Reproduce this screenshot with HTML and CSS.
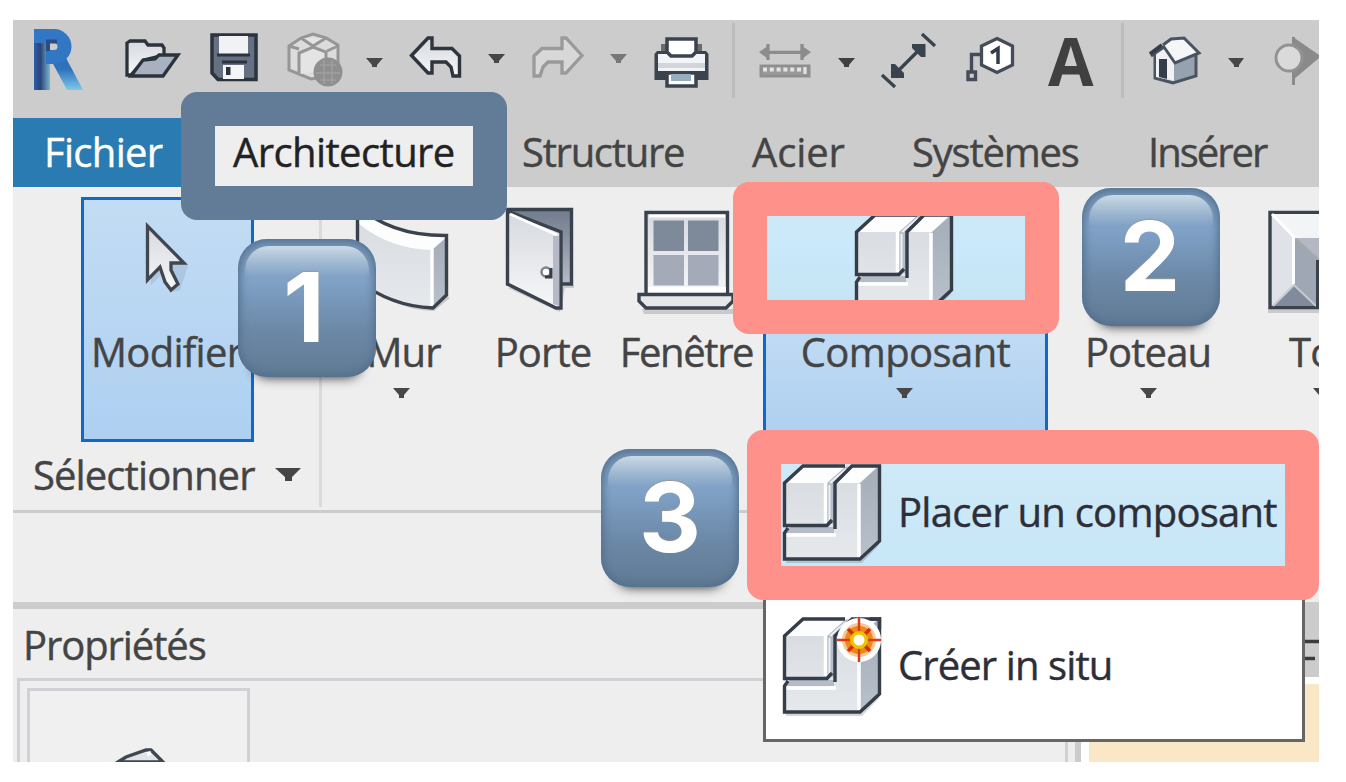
FILE: index.html
```html
<!DOCTYPE html>
<html lang="fr">
<head>
<meta charset="utf-8">
<title>Revit – Placer un composant</title>
<link rel="stylesheet" href="styles.css">
</head>
<body>
<svg class="defs" width="0" height="0">
  <defs>
    <linearGradient id="metal" x1="0" y1="0" x2="0" y2="1"><stop offset="0" stop-color="#d6d9df"/><stop offset="1" stop-color="#f6f7f8"/></linearGradient>
    <linearGradient id="face" x1="0" y1="0" x2="0" y2="1"><stop offset="0" stop-color="#d6d9df"/><stop offset="1" stop-color="#e6e9ec"/></linearGradient>
    <linearGradient id="side" x1="0" y1="0" x2="0" y2="1"><stop offset="0" stop-color="#a5adb9"/><stop offset="1" stop-color="#b8c0cb"/></linearGradient>
    <linearGradient id="dark" x1="0" y1="0" x2="0" y2="1"><stop offset="0" stop-color="#6f7b8c"/><stop offset="1" stop-color="#b5b9c5"/></linearGradient>
    <linearGradient id="logo" x1="0" y1="0" x2="0" y2="1"><stop offset="0" stop-color="#2f6fb5"/><stop offset=".4" stop-color="#2f74bd"/><stop offset="1" stop-color="#7cc8ea"/></linearGradient>
    <linearGradient id="stem" x1="0" y1="0" x2="1" y2="0"><stop offset="0" stop-color="#2c5ea8"/><stop offset=".4" stop-color="#2a4478"/><stop offset="1" stop-color="#7db5cf"/></linearGradient>
    <symbol id="component" viewBox="0 0 104 104">
      <path d="M6 97H80L99 79V83L82 101H6Z" fill="#777" opacity=".3"/>
      <path d="M4 21 22 4H99V79L80 97H4V70L8 66H4Z" fill="url(#face)"/>
      <path d="M5 21 23 4H66L48 21ZM55 21 73 4H98L80 21Z" fill="#fdfdfd"/>
      <path d="M80 21 98 5V79L80 97Z" fill="url(#side)"/>
      <path d="M47 21 65 5 71 5 54 21V62L47 62ZM10 65H54V71H7Z" fill="#b4bcc7"/>
      <path d="M45.500 21V61M5 73H56M79 22V96" fill="none" stroke="#fff" stroke-width="3.500"/>
      <path d="M49.500 23V61M50 21 66 7" fill="none" stroke="#eef0f3" stroke-width="2"/>
      <path d="M65 4H23L4.500 21V63.500H47L52 58M55 67V21L72 4H99.500V79L80 97H4.500V71L8 66" fill="none" stroke="#343d48" stroke-width="3.400"/>
    </symbol>
  </defs>
</svg>

<main class="app">
  <header class="quickbar">
    <svg width="100" height="98" viewBox="13 20 100 98">
      <path d="M34 29H50V90H34Z" fill="url(#stem)"/>
      <path d="M51 60 65 56 83 90H67Z" fill="url(#logo)"/>
      <path d="M34 36H54A10.500 10.500 0 0 1 54 57H46" fill="none" stroke="#3277c4" stroke-width="14"/>
      <path d="M48 51V41.500H57" fill="none" stroke="#2b4c84" stroke-width="4"/>
    </svg>
    <svg width="87" height="98" viewBox="113 20 87 98">
      <path d="M127 43 130 41H145L148 45H162L164 48V55L144 60 131 75H127Z" fill="url(#metal)" stroke="#2b333c" stroke-width="3.300"/>
      <path d="M131 76 143 60 155 59 159 55H178L163 76Z" fill="#a9b0bf" stroke="#2b333c" stroke-width="3.300"/>
    </svg>
    <svg width="75" height="98" viewBox="200 20 75 98">
      <path d="M212 35H256V79.500H218L212 73Z" fill="#657082" stroke="#2b333c" stroke-width="3.500"/>
      <path d="M219 36H248V54H219Z" fill="#f1f2f4"/><path d="M217 55H250M222 62H247" stroke="#2b333c" stroke-width="3"/>
      <path d="M223 65H244V79H223Z" fill="#f4f5f6"/><path d="M226 67H230.500V75H226Z" fill="#2b333c"/>
    </svg>
    <svg width="83" height="98" viewBox="275 20 83 98">
      <g stroke="#969696" stroke-width="3"><path d="M289 46 301 38 313 34 326 38 338 45V68L322 77 311 79 289 70Z" fill="#dcdcdc"/>
      <path d="M289 46 299 49M299 74V53L313 47 326 52V70M338 46 327 51M301 38 313 46 326 38" fill="#e4e4e4"/></g>
      <circle cx="328" cy="72" r="14.500" fill="#8f8f8f"/><path d="M320 65H336M316 73H340M320 80H336M324 60V84M332 60V84" stroke="#a0a0a0" stroke-width="1.500"/>
    </svg>
    <svg width="42" height="98" viewBox="358 20 42 98"><path d="M366 58H383L377 65V67H372V65Z" fill="#474747"/></svg>
    <svg width="78" height="98" viewBox="400 20 78 98">
      <path d="M411.500 55.500 428 38H432V48.500H452L459.500 56V76H453L451 67 446 62H432V73H428Z" fill="url(#metal)" stroke="#2e353d" stroke-width="3.400"/>
    </svg>
    <svg width="42" height="98" viewBox="478 20 42 98"><path d="M488 54H505L499 61V63H494V61Z" fill="#474747"/></svg>
    <svg width="78" height="98" viewBox="520 20 78 98">
      <path d="M582 55.500 566 38H562V48.500H542L534 56V76H540L543 67 548 62H562V73H566Z" fill="#d8d8d8" stroke="#9a9a9a" stroke-width="3.300"/>
    </svg>
    <svg width="42" height="98" viewBox="598 20 42 98"><path d="M610 54H627L621 61V63H616V61Z" fill="#777"/></svg>
    <svg width="92" height="98" viewBox="640 20 92 98">
      <path d="M661 44H702V55H661Z" fill="#6c6c6c"/><path d="M657 51H706L708.500 54V80H654.500V54Z" fill="#3b434e"/>
      <path d="M658 54H705V71H658Z" fill="#f3f4f7"/><path d="M658 63H705V68H658Z" fill="#d3d5dc"/>
      <path d="M667 39H696V52L692 56H671L667 52Z" fill="#fff" stroke="#3b434e" stroke-width="3.500"/>
      <path d="M667 73H696V86H667Z" fill="#fff" stroke="#3b434e" stroke-width="3.500"/><path d="M671 74H691V81H671Z" fill="#96acbf"/>
    </svg>
    <i class="bar-split"></i>
    <svg width="90" height="98" viewBox="735 20 90 98">
      <path d="M762 52.300H808M768 44V60M802 44V60" stroke="#8c8c8c" stroke-width="3.300"/><path d="M759 52 768 46V59ZM811 52 802 46V59Z" fill="#8c8c8c"/>
      <path d="M761 66H809V76H761Z" fill="#9a9a9a" stroke="#8f8f8f" stroke-width="3"/><path d="M763 69.500H805" stroke="#e4e4e4" stroke-width="4" stroke-dasharray="4 2.800"/><path d="M805 67V74" stroke="#e4e4e4" stroke-width="3"/>
    </svg>
    <svg width="42" height="98" viewBox="825 20 42 98"><path d="M838 58H855L849 65V67H844V65Z" fill="#40403e"/></svg>
    <svg width="85" height="98" viewBox="867 20 85 98">
      <path d="M882 75 895 87M922 34 935 46M897 72 922 47" stroke="#3a434d" stroke-width="3.300"/>
      <path d="M891 64H895L904 73V78H891ZM912 44H925.500V57H921L912 48Z" fill="#3a434d"/>
    </svg>
    <svg width="84" height="98" viewBox="952 20 84 98">
      <path d="M997 38.500 1012.500 46V65L997 72.500 981.500 65V46Z" fill="#fff" stroke="#434c58" stroke-width="3.300"/>
      <path d="M991 53 998 48.500V64" fill="none" stroke="#333c46" stroke-width="3.500"/>
      <path d="M981 54.500H971.500V72M968 72H975.500V79.500H968Z" fill="none" stroke="#434c58" stroke-width="3.400"/>
    </svg>
    <span class="text-tool">A</span>
    <i class="bar-split"></i>
    <svg width="92" height="98" viewBox="1124 20 92 98">
      <path d="M1155 54V78L1173 83 1196 76V52L1175 62Z" fill="#97a2b0" stroke="#4a5461" stroke-width="3"/>
      <path d="M1156 54 1163 47 1174 63V81L1156 77Z" fill="#eff1f5"/><path d="M1159 59H1167V79L1159 77Z" fill="#343d49"/>
      <path d="M1163 45 1171 39 1184 38 1199 53 1175 63 1164 47 1151 56" fill="#f5f6f8" stroke="#4a5461" stroke-width="3"/>
      <path d="M1150 54 1162 45" stroke="#343d49" stroke-width="4"/>
    </svg>
    <svg width="44" height="98" viewBox="1216 20 44 98"><path d="M1228 58H1244L1239 65V67H1234V65Z" fill="#474747"/></svg>
    <svg width="59" height="98" viewBox="1260 20 59 98">
      <path d="M1293 37 1319 55V58L1293 80Z" fill="#8a8a8a"/><path d="M1293.500 37V85" stroke="#8a8a8a" stroke-width="3"/>
      <circle cx="1289" cy="58" r="13" fill="#dadada" stroke="#929292" stroke-width="3"/>
    </svg>
  </header>

  <nav class="tabs">
    <a class="tab file">Fichier</a>
    <a class="tab active">Architecture</a>
    <a class="tab structure">Structure</a>
    <a class="tab steel">Acier</a>
    <a class="tab systems">Systèmes</a>
    <a class="tab insert">Insérer</a>
  </nav>

  <section class="ribbon">
    <div class="select-panel">
      <div class="modify">
        <svg width="167" height="124" viewBox="84 200 167 124">
          <path d="M151 229 188 266 180 290 174 292 164 272 151 285Z" fill="#5c7896" opacity=".18"/>
          <path d="M147.500 226V280L160 267 165 282 171 290 178 284 171 270V263H184Z" fill="url(#metal)" stroke="#40474f" stroke-width="3.300"/>
        </svg>
        <span>Modifier</span>
      </div>
      <div class="panel-title"><span>Sélectionner</span>
        <svg width="26" height="14" viewBox="0 0 26 14"><path d="M0 0H26L17 9V13H10V9Z" fill="#454545"/></svg>
      </div>
    </div>
    <div class="tools">
      <div class="tool wall">
        <svg width="154" height="137" viewBox="322 187 154 137">
          <path d="M360 283Q400 311 434 311L450 298 447 296 433 308Z" fill="#888" opacity=".35"/>
          <path d="M357.500 205Q390 238 447 236V296L433 308Q390 306 357.500 280Z" fill="url(#face)"/>
          <path d="M359 205Q390 236 446 237L432 250Q390 249 359 224Z" fill="#fdfdfd"/><path d="M432 250 446 238V295L432 307Z" fill="url(#side)"/>
          <path d="M432 249V306" stroke="#fff" stroke-width="3.500"/>
          <path d="M357.500 205Q390 236 446.500 235.500V295L433 308Q390 306 357.500 280Z" fill="none" stroke="#3a434d" stroke-width="3.400"/>
        </svg>
        <span>Mur</span>
        <svg width="17" height="10" viewBox="0 0 17 10"><path d="M0 0H17L11 7V10H6V7Z" fill="#474747"/></svg>
      </div>
      <div class="tool door">
        <svg width="134" height="137" viewBox="476 187 134 137">
          <path d="M508 288 560 312 565 288H574V285Z" fill="#888" opacity=".35"/>
          <path d="M508 209.500H571.500V284H508Z" fill="url(#dark)" stroke="#3a434d" stroke-width="3.400"/>
          <path d="M507.500 211 561 232V308H556L507.500 284Z" fill="url(#metal)" stroke="#3a434d" stroke-width="3.400"/>
          <path d="M510 214 557 235" stroke="#fff" stroke-width="3"/><path d="M553 236 559 236V306L553 304Z" fill="#b5bac6"/>
          <circle cx="546" cy="272" r="4.500" fill="#fff" stroke="#7a8490" stroke-width="2.500"/><path d="M545 277H551V268" fill="none" stroke="#343d48" stroke-width="3"/>
        </svg>
        <span>Porte</span>
      </div>
      <div class="tool window">
        <svg width="153" height="137" viewBox="610 187 153 137">
          <path d="M642 309H733V314H644Z" fill="#888" opacity=".35"/>
          <path d="M646 212.500H727.500V296H646Z" fill="url(#metal)" stroke="#3a434d" stroke-width="3.400"/>
          <path d="M649 216H725" stroke="#fff" stroke-width="3"/>
          <path d="M653.500 220.500H684V251H653.500ZM688 220.500H718.500V251H688Z" fill="#7e8999"/><path d="M653.500 255H684V285.500H653.500ZM688 255H718.500V285.500H688Z" fill="#a4aab8"/>
          <path d="M648 287H726V292H648Z" fill="#fff"/>
          <path d="M639 294.500H733V301L726 308H646L639 301Z" fill="#e5e7eb" stroke="#3a434d" stroke-width="3.400"/>
        </svg>
        <span>Fenêtre</span>
      </div>
      <div class="tool component">
        <div class="component-icon"><svg width="104" height="104"><use href="#component"/></svg></div>
        <span>Composant</span>
        <svg width="17" height="10" viewBox="0 0 17 10"><path d="M0 0H17L11 7V10H6V7Z" fill="#474747"/></svg>
      </div>
      <div class="tool column">
        <div class="icon-slot"></div>
        <span>Poteau</span>
        <svg width="17" height="10" viewBox="0 0 17 10"><path d="M0 0H17L11 7V10H6V7Z" fill="#474747"/></svg>
      </div>
      <div class="tool roof">
        <svg width="71" height="137" viewBox="1248 187 71 137">
          <path d="M1268 308H1319V313H1268Z" fill="#888" opacity=".35"/>
          <path d="M1270 212.500H1340V307.500H1270Z" fill="#dfe2e7" stroke="#3a434d" stroke-width="3.400"/>
          <path d="M1272 214H1319V238H1295Z" fill="#f3f4f6"/><path d="M1273 306 1294 285 1316 306Z" fill="#818b9c"/>
          <path d="M1295 238H1319V306H1316L1295 286Z" fill="#a0a7b4"/><path d="M1295 238 1319 260V238Z" fill="#b3b8c4"/>
          <path d="M1272 214 1295 238" fill="none" stroke="#fff" stroke-width="3"/><path d="M1296 239 1319 260" stroke="#a8a8a8" stroke-width="2"/>
          <path d="M1293.500 237V285" stroke="#fff" stroke-width="3"/><path d="M1273 306 1294 285 1316 306" fill="none" stroke="#c6cad2" stroke-width="2"/><path d="M1318 260V307" stroke="#3a434d" stroke-width="4"/>
        </svg>
        <span>Toit</span>
        <svg width="17" height="10" viewBox="0 0 17 10"><path d="M0 0H17L11 7V10H6V7Z" fill="#474747"/></svg>
      </div>
    </div>
  </section>
  <div class="options-bar"></div>

  <section class="workspace">
    <aside class="properties">
      <h2>Propriétés</h2>
      <div class="property-list"><div class="preview">
        <svg width="217" height="71" viewBox="30 691 217 71"><path d="M118 762 126 757 146 750H151L163 762Z" fill="#dfe3ea" stroke="#3f4750" stroke-width="3.400"/><path d="M147 754 151 753" stroke="#fff" stroke-width="4"/></svg>
      </div></div>
    </aside>
    <div class="drawing">
      <div class="view-tab"><svg width="14" height="24" viewBox="0 0 14 24"><path d="M0 3.500H14M0 20.500H10" stroke="#3c3c3c" stroke-width="3.400"/></svg></div>
      <div class="sheet"></div>
    </div>
  </section>

  <div class="menu">
    <div class="menu-item hovered"><svg width="104" height="104"><use href="#component"/></svg><span class="place">Placer un composant</span></div>
    <div class="menu-item"><svg width="104" height="104">
      <use href="#component"/>
      <path d="M79 3A22 22 0 1 0 79.100 3Z" fill="#fff"/><path d="M90 4H99.500V14" fill="none" stroke="#343d48" stroke-width="3.400"/>
      <circle cx="79" cy="25" r="17" fill="#f6c898"/><circle cx="79" cy="25" r="14" fill="#eb8a18"/>
      <path d="M79 3V47M57 25H101" stroke="#e0391a" stroke-width="2.500"/><path d="M68 14 90 36M90 14 68 36" stroke="#d92c10" stroke-width="3.500"/>
      <circle cx="79" cy="25" r="9" fill="#ecc400"/><circle cx="79" cy="25" r="5.500" fill="#fffdf0"/>
    </svg><span class="create">Créer in situ</span></div>
  </div>

  <div class="frame blue"></div>
  <div class="frame pink tool-frame"></div>
  <div class="frame pink menu-frame"></div>
  <div class="key one">1</div>
  <div class="key two">2</div>
  <div class="key three">3</div>
</main>
</body>
</html>
```
FILE: styles.css
```css
* { box-sizing: border-box; }
body { margin: 0; background: #fff; }
svg { display: block; flex: none; }
.defs { position: absolute; }

.app {
  position: relative;
  display: flex;
  flex-direction: column;
  width: 1306px;
  height: 742px;
  margin: 20px 13px;
  overflow: hidden;
  background: #eee;
  color: #444;
  font: 40px/54px "Open Sans", "Noto Sans", sans-serif;
  letter-spacing: -.9px;
  white-space: nowrap;
  -webkit-text-stroke: .4px;
}

.quickbar { display: flex; flex: none; height: 98px; background: #ccc; }
.bar-split { flex: none; width: 3px; height: 75px; margin-top: 3px; background: #bdbdbd; }
.text-tool {
  width: 86px;
  padding-left: 12px;
  font-size: 66px;
  font-weight: 700;
  line-height: 80px;
  color: #404040;
  -webkit-text-stroke: 0;
}

.tabs {
  display: grid;
  grid-template-columns: 168px 325px 230px 160px 236px 187px;
  flex: none;
  height: 69px;
  background: #ccc;
}
.tab { padding: 7px 0 0 16px; letter-spacing: -1px; }
.tab.file { padding-left: 31px; background: #2b7bb3; color: #fff; letter-spacing: -.7px; }
.tab.active { padding-left: 52px; background: #eee; color: #222; letter-spacing: -.6px; }
.tab.structure { letter-spacing: -1.3px; }
.tab.steel { letter-spacing: -.1px; }
.tab.systems { letter-spacing: -1.2px; }
.tab.insert { letter-spacing: -2px; }

.ribbon {
  display: flex;
  flex: none;
  height: 326px;
  border-bottom: 3px solid #ccc;
}
.select-panel {
  flex: none;
  width: 309px;
  height: 320px;
  padding: 10px 0 0 68px;
  border-right: 3px solid #dadada;
}
.modify {
  width: 173px;
  height: 245px;
  border: 3px solid #1168c7;
  background: linear-gradient(#c3dcf4, #aed0f1);
}
.modify span { display: block; padding: 1px 0 0 7px; letter-spacing: -.7px; }
.panel-title { display: flex; align-items: center; gap: 20px; margin: 6px 0 0 -48px; }

.tools { display: grid; grid-template-columns: 154px 134px 153px 285px 200px 71px; width: 997px; }
.tool { display: flex; flex-direction: column; align-items: center; height: 323px; overflow: hidden; }
.tool > span { margin-top: 1px; }
.tool > svg:last-child { margin-top: 9px; }
.wall span { margin-left: 9px; }
.wall > svg:last-child { margin-left: 4px; }
.window span { letter-spacing: -1.4px; }
.component span { letter-spacing: -.6px; }
.component {
  border: solid #1168c7;
  border-width: 0 3px;
  background: linear-gradient(#d0eaf6, #cae9fa 55px, #c5e5f5 113px, #c1dbf4 140px, #aed0f0 250px);
}
.component > svg:last-child { margin-left: -3px; }
.component-icon { height: 137px; padding: 24px 4px 0 0; }
.icon-slot { height: 137px; }
.roof { align-items: flex-start; }
.roof span { padding-left: 41px; }
.roof > svg:last-child { margin-left: 65px; }

.options-bar { flex: none; height: 96px; border-bottom: 7px solid #ccc; }

.workspace { display: flex; flex: 1; }
.properties { width: 1062px; padding-left: 4px; }
.properties h2 { margin: 9px 0 6px; padding-left: 6px; font: inherit; letter-spacing: -1.1px; }
.property-list {
  width: 1051px;
  height: 90px;
  padding: 7px;
  border: 3px solid #cfd1d4;
}
.preview { width: 223px; height: 90px; border: 3px solid #cfd1d4; background: #f0f0f0; }
.drawing { flex: 1; border-left: 6px solid #ccc; background: #fff; }
.view-tab { display: flex; justify-content: flex-end; height: 68px; padding-top: 29px; background: #ccc; }
.sheet { height: 78px; margin: 7px 0 0 8px; background: #f9e7c5; }

.menu {
  position: absolute;
  left: 750px;
  top: 420px;
  width: 542px;
  height: 302px;
  border: 3px solid #666;
  background: #fff;
}
.menu-item { display: flex; height: 153px; padding: 19px 0 0 14px; color: #2e2e38; }
.menu-item.hovered { background: linear-gradient(#d0eaf7, #c5e6f7); }
.menu-item span { margin: 23px 0 0 14px; }
.menu-item .place { letter-spacing: -.75px; }

.frame { position: absolute; border: 34px solid; border-radius: 16px; }
.blue { left: 168px; top: 72px; width: 326px; height: 128px; border-color: #627b96; }
.pink { border-color: #fe9189; }
.tool-frame { left: 720px; top: 162px; width: 326px; height: 152px; }
.menu-frame { left: 734px; top: 410px; width: 572px; height: 170px; }

.key {
  position: absolute;
  z-index: 1;
  width: 138px;
  height: 138px;
  border-radius: 29px;
  background: linear-gradient(#7292b5, #80a2c7 30%, #6c89a8 65%, #607a93);
  box-shadow: inset 0 0 8px 2px #526e8b, 0 16px 12px -16px #222;
  color: #fff;
  font: 700 96px/136px Inter, "Liberation Sans", sans-serif;
  letter-spacing: 0;
  text-align: center;
  text-shadow: 0 -1px 1px #9a9a9a;
  -webkit-text-stroke: 0;
}
.key::before {
  content: "";
  position: absolute;
  z-index: -1;
  inset: 7px 7px auto;
  height: 32px;
  border-radius: 24px 24px 0 0;
  background: linear-gradient(#cbdae6, #80a2c700);
}
.one { left: 225px; top: 219px; padding-right: 6px; }
.two { left: 1069px; top: 168px; padding-right: 2px; }
.three { left: 588px; top: 429px; }
```
